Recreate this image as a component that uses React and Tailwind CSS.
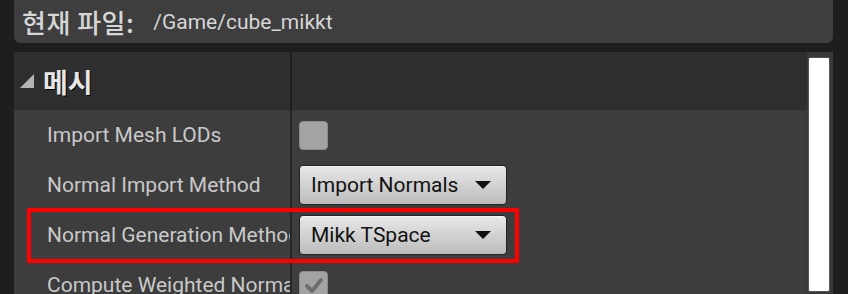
const rows = [
  { label: 'Import Mesh LODs', kind: 'check', checked: false },
  { label: 'Normal Import Method', kind: 'select', value: 'Import Normals' },
  { label: 'Normal Generation Method', kind: 'select', value: 'Mikk TSpace' },
  { label: 'Compute Weighted Normals', kind: 'check', checked: true },
]

const latin = { fontFamily: 'Roboto, "Noto Sans CJK KR", sans-serif' }
const korean = { fontFamily: '"Noto Sans CJK KR", Roboto, sans-serif' }

function Checkbox({ checked }) {
  return (
    <div className="w-[29px] h-[29px] rounded-[4px] bg-[#a3a3a3] border border-[#8c8c8c] flex items-center justify-center">
      {checked && (
        <svg width="20" height="18" viewBox="0 0 20 18">
          <path d="M3 10 L8 15 L17 4" fill="none" stroke="#6e6e6e" strokeWidth="4" strokeLinecap="round" strokeLinejoin="round" />
        </svg>
      )}
    </div>
  )
}

function Select({ value }) {
  return (
    <div className="w-[208px] h-[40px] rounded-[4px] border border-[#232323] bg-gradient-to-b from-[#e8e8e8] to-[#bcbcbc] flex items-center pl-[11px] pr-[15px] shadow-[inset_0_1px_0_#f6f6f6]">
      <span className="flex-1 text-[21px] text-[#111] leading-none" style={latin}>{value}</span>
      <svg width="16" height="8" viewBox="0 0 16 8">
        <path d="M0 0 H16 L8 8 Z" fill="#111" />
      </svg>
    </div>
  )
}

export default function App() {
  return (
    <div className="w-[848px] h-[294px] bg-[#1e1e1e] overflow-hidden pl-[14px] pr-[15px]">
      {/* current file */}
      <div className="h-[43px] bg-[#3e3e3e] rounded-b-[6px] flex items-center pl-[8px] gap-[19px]">
        <span className="text-[26px] font-medium text-[#d6d6d6] leading-none tracking-[0.5px]" style={korean}>현재 파일:</span>
        <span className="text-[21px] text-[#d6d6d6] leading-none mt-[2px]" style={latin}>/Game/cube_mikkt</span>
      </div>

      {/* details panel */}
      <div className="relative mt-[9px] flex h-[260px]">
        <div className="flex-1 flex flex-col">
          <div className="h-[58px] bg-[#2f2f2f] flex shrink-0">
            <div className="w-[276px] flex items-center pl-[6px] gap-[9px]">
              <svg width="14" height="14" viewBox="0 0 14 14">
                <path d="M14 0 V14 H0 Z" fill="#b4b4b4" />
              </svg>
              <span className="text-[27px] font-bold text-[#e6e6e6] leading-none [text-shadow:1px_1px_0_#000]" style={korean}>메시</span>
            </div>
            <div className="w-[2px] bg-[#1f1f1f]" />
            <div className="flex-1" />
          </div>
          {rows.map((r) => (
            <div key={r.label} className="h-[50px] bg-[#3d3d3d] flex shrink-0">
              <div className="w-[276px] flex items-center pl-[33px] overflow-hidden whitespace-nowrap">
                <span className="text-[21px] text-[#c9c9c9] leading-none" style={latin}>{r.label}</span>
              </div>
              <div className="w-[2px] bg-[#262626]" />
              <div className="flex-1 flex items-center pl-[7px]">
                {r.kind === 'check' ? <Checkbox checked={r.checked} /> : <Select value={r.value} />}
              </div>
            </div>
          ))}
        </div>

        {/* scrollbar */}
        <div className="w-[26px] bg-[#393939] pt-[5px] pl-[1px]">
          <div className="w-[22px] h-[235px] bg-white border border-[#555] rounded-[2px]" />
        </div>

        {/* highlight box */}
        <div className="absolute left-[13px] top-[156px] w-[492px] h-[55px] border-[4px] border-[#ff0000]" />
      </div>
    </div>
  )
}
